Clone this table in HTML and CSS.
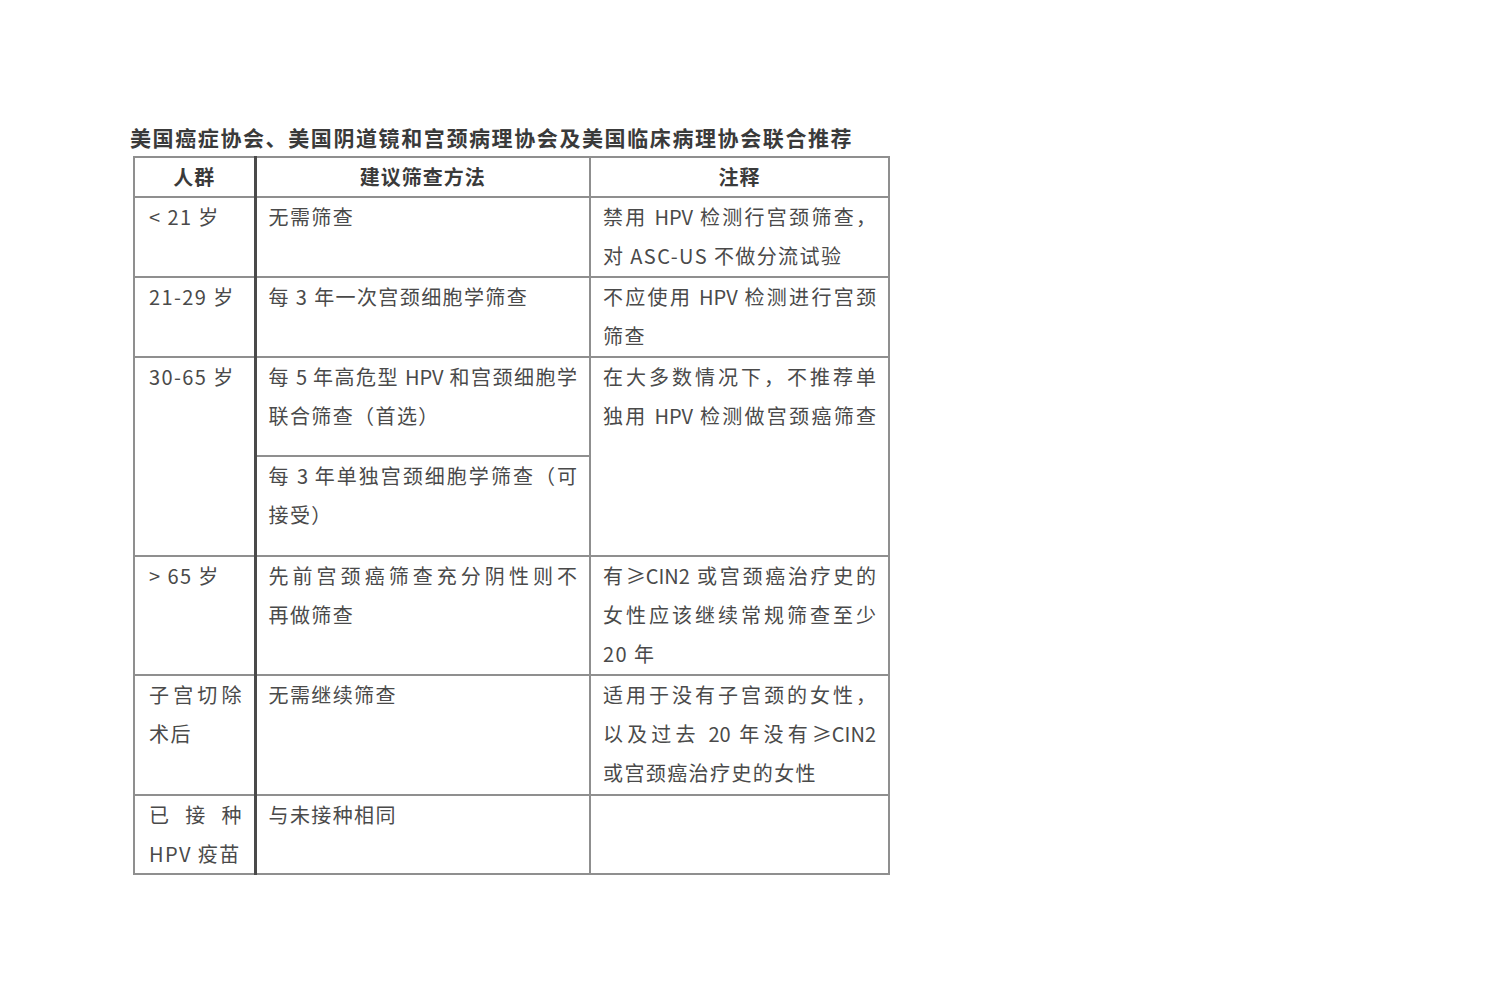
FILE: index.html
```html
<!DOCTYPE html>
<html lang="zh-CN">
<head>
<meta charset="utf-8">
<title>宫颈癌筛查推荐</title>
<link rel="stylesheet" href="styles.css">
</head>
<body>
<div class="page">
  <div class="caption">美国癌症协会、美国阴道镜和宫颈病理协会及美国临床病理协会联合推荐</div>
  <table class="grid">
    <colgroup>
      <col class="c1">
      <col class="c2">
      <col class="c3">
    </colgroup>
    <thead>
      <tr class="head">
        <th class="first">人群</th>
        <th>建议筛查方法</th>
        <th>注释</th>
      </tr>
    </thead>
    <tbody>
      <tr class="h80">
        <td class="first"><span class="ln">&lt; 21 岁</span></td>
        <td><span class="ln">无需筛查</span></td>
        <td>
          <span class="ln full">禁用 HPV 检测行宫颈筛查，</span>
          <span class="ln">对 ASC-US 不做分流试验</span>
        </td>
      </tr>
      <tr class="h80">
        <td class="first"><span class="ln">21-29 岁</span></td>
        <td><span class="ln">每 3 年一次宫颈细胞学筛查</span></td>
        <td>
          <span class="ln full">不应使用 HPV 检测进行宫颈</span>
          <span class="ln">筛查</span>
        </td>
      </tr>
      <tr class="h99">
        <td class="first" rowspan="2"><span class="ln">30-65 岁</span></td>
        <td>
          <span class="ln full">每 5 年高危型 HPV 和宫颈细胞学</span>
          <span class="ln">联合筛查（首选）</span>
        </td>
        <td rowspan="2">
          <span class="ln full">在大多数情况下，不推荐单</span>
          <span class="ln full">独用 HPV 检测做宫颈癌筛查</span>
        </td>
      </tr>
      <tr class="h100">
        <td>
          <span class="ln full">每 3 年单独宫颈细胞学筛查（可</span>
          <span class="ln">接受）</span>
        </td>
      </tr>
      <tr class="h119">
        <td class="first"><span class="ln">&gt; 65 岁</span></td>
        <td>
          <span class="ln full">先前宫颈癌筛查充分阴性则不</span>
          <span class="ln">再做筛查</span>
        </td>
        <td>
          <span class="ln full">有≥CIN2 或宫颈癌治疗史的</span>
          <span class="ln full">女性应该继续常规筛查至少</span>
          <span class="ln">20 年</span>
        </td>
      </tr>
      <tr class="h120">
        <td class="first">
          <span class="ln full">子宫切除</span>
          <span class="ln">术后</span>
        </td>
        <td><span class="ln">无需继续筛查</span></td>
        <td>
          <span class="ln full">适用于没有子宫颈的女性，</span>
          <span class="ln full">以及过去 20 年没有≥CIN2</span>
          <span class="ln">或宫颈癌治疗史的女性</span>
        </td>
      </tr>
      <tr class="h79">
        <td class="first">
          <span class="ln full">已接种</span>
          <span class="ln">HPV 疫苗</span>
        </td>
        <td><span class="ln">与未接种相同</span></td>
        <td></td>
      </tr>
    </tbody>
  </table>
</div>
</body>
</html>
```
FILE: styles.css
```css
html, body {
  margin: 0;
  padding: 0;
  background: #ffffff;
}

body {
  font-family: "Noto Sans CJK SC", "Noto Sans", sans-serif;
  color: #4a4a4a;
}

.page {
  padding: 122px 0 0 130px;
}

.caption {
  font-size: 21px;
  line-height: 30px;
  font-weight: 700;
  letter-spacing: 1.6px;
  color: #3a3a3a;
  margin-bottom: 4px;
  white-space: nowrap;
}

.grid {
  margin-left: 3px;
  border-collapse: collapse;
  table-layout: fixed;
  width: 755px;
}

.c1 { width: 121px; }
.c2 { width: 335px; }
.c3 { width: 299px; }

.grid th,
.grid td {
  border: 2px solid #8f8f8f;
  vertical-align: top;
  padding: 0 12px 0 12px;
  font-size: 20px;
  line-height: 39px;
  font-weight: 400;
}

.grid td.first {
  padding-left: 14px;
}

.grid th {
  text-align: center;
  font-weight: 700;
  color: #3a3a3a;
  padding: 0;
  line-height: 38px;
  letter-spacing: 1px;
}

.grid .first {
  border-right: 3px solid #4a4a4a;
}

.ln {
  display: block;
  white-space: nowrap;
  letter-spacing: 1.4px;
  text-align: left;
}

.ln:first-child {
  margin-top: -1px;
}

.ln.full {
  text-align: justify;
  text-align-last: justify;
  letter-spacing: 0;
}

.head { height: 39px; }
.h80 { height: 80px; }
.h99 { height: 99px; }
.h100 { height: 100px; }
.h119 { height: 119px; }
.h120 { height: 120px; }
.h79 { height: 78px; }
```
